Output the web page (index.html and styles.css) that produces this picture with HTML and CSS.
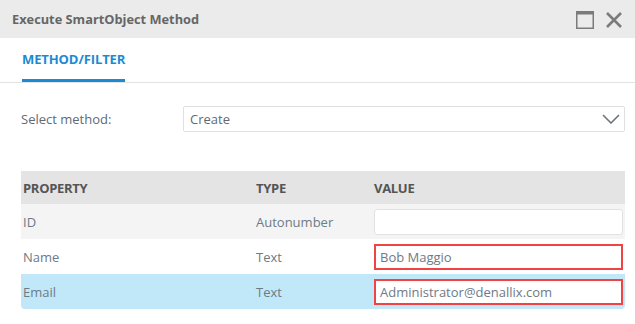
FILE: index.html
```html
<!DOCTYPE html>
<html>
<head>
<meta charset="utf-8">
<link rel="stylesheet" href="styles.css">
</head>
<body>
<div class="dialog">
  <div class="titlebar">
    <span class="title">Execute SmartObject Method</span>
    <div class="controls">
      <svg class="icon" width="18" height="18" viewBox="0 0 18 18">
        <rect x="0.75" y="0.75" width="16.5" height="16.5" fill="none" stroke="#7b7b7b" stroke-width="1.5"/>
        <rect x="0" y="0" width="18" height="3.5" fill="#7b7b7b"/>
      </svg>
      <svg class="icon" width="18" height="18" viewBox="0 0 18 18">
        <path d="M2 2 L16 16 M16 2 L2 16" stroke="#7b7b7b" stroke-width="2.6" fill="none"/>
      </svg>
    </div>
  </div>
  <div class="tabs">
    <div class="tab active">METHOD/FILTER</div>
  </div>
  <div class="content">
    <div class="field">
      <label class="label">Select method:</label>
      <div class="select">
        <span>Create</span>
        <svg width="18" height="10" viewBox="0 0 18 10">
          <path d="M1 1 L9 9 L17 1" stroke="#6e7379" stroke-width="1.6" fill="none"/>
        </svg>
      </div>
    </div>
    <div class="table">
      <div class="row head">
        <div class="c1">PROPERTY</div>
        <div class="c2">TYPE</div>
        <div class="c3">VALUE</div>
      </div>
      <div class="row alt">
        <div class="c1">ID</div>
        <div class="c2">Autonumber</div>
        <div class="c3"><div class="input"></div></div>
      </div>
      <div class="row">
        <div class="c1">Name</div>
        <div class="c2">Text</div>
        <div class="c3"><div class="input marked">Bob Maggio</div></div>
      </div>
      <div class="row selected">
        <div class="c1">Email</div>
        <div class="c2">Text</div>
        <div class="c3"><div class="input marked">Administrator@denallix.com</div></div>
      </div>
    </div>
  </div>
</div>
</body>
</html>
```
FILE: styles.css
```css
* { box-sizing: border-box; }
html, body {
  margin: 0;
  padding: 0;
  background: #fff;
  font-family: "Open Sans", "Liberation Sans", sans-serif;
}
.dialog {
  width: 635px;
  height: 324px;
  background: #fff;
}
.titlebar {
  height: 38px;
  background: #ebebeb;
  display: flex;
  align-items: center;
  justify-content: space-between;
  padding: 0 12px 0 12px;
}
.title {
  font-size: 12.8px;
  font-weight: 700;
  color: #666;
}
.controls {
  display: flex;
  gap: 11px;
  align-items: center;
  padding-top: 1px;
}
.icon { display: block; }
.tabs {
  height: 45px;
  border-bottom: 1px solid #e3e3e3;
  padding-left: 22px;
  display: flex;
}
.tab {
  font-size: 13px;
  font-weight: 700;
  color: #1a8bd3;
  padding-top: 12px;
  height: 44px;
  border-bottom: 3px solid #1a8bd3;
  letter-spacing: -0.1px;
}
.content {
  padding: 23px 10px 0 21px;
}
.field {
  display: flex;
  align-items: center;
  height: 26px;
}
.label {
  width: 162px;
  font-size: 13px;
  color: #5f6a75;
}
.select {
  flex: 1;
  height: 26px;
  border: 1px solid #e0e0e0;
  border-radius: 2px;
  display: flex;
  align-items: center;
  justify-content: space-between;
  padding: 0 4px 0 6px;
  font-size: 13px;
  color: #5f6a75;
}
.table {
  margin-top: 39px;
  width: 604px;
}
.row {
  display: flex;
  align-items: center;
  height: 35px;
  font-size: 13px;
  color: #6e7a86;
}
.row.head {
  height: 33px;
  background: #e4e4e4;
  font-weight: 700;
  color: #555;
  font-size: 13px;
  letter-spacing: -0.3px;
}
.row.alt { background: #f4f4f4; }
.row.selected {
  background: #c1e8f8;
  border-radius: 0 0 4px 4px;
}
.c1 { width: 235px; padding-left: 2px; }
.c2 { width: 118px; }
.c3 { flex: 1; padding-right: 2px; }
.input {
  height: 26px;
  background: #fff;
  border: 1px solid #e2e2e2;
  border-radius: 3px;
  padding-left: 5px;
  display: flex;
  align-items: center;
  font-size: 13px;
  color: #6e7a86;
}
.input.marked {
  border: 2px solid #f04444;
  border-radius: 0;
  padding-left: 4px;
}
```
